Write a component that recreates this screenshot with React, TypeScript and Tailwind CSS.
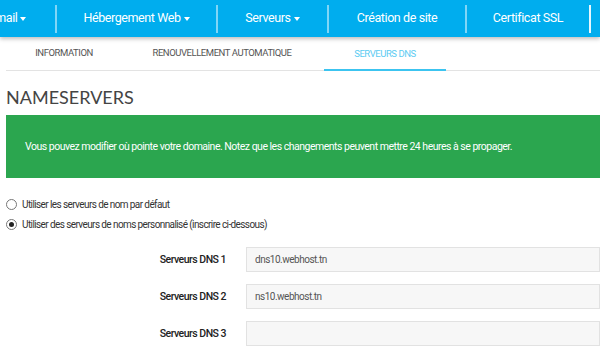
import React from 'react';

const font = { fontFamily: 'Roboto, "Liberation Sans", sans-serif' };

function Caret() {
  return <span className="ml-[3px] inline-block w-0 h-0 border-l-[3px] border-r-[3px] border-t-[4px] border-l-transparent border-r-transparent border-t-white align-middle" />;
}

function Divider({ bright }: { bright?: boolean }) {
  return <span className={`w-[2px] h-[28px] self-center ${bright ? 'bg-white/90' : 'bg-white/50'}`} />;
}

export default function App() {
  const [mode, setMode] = React.useState<'default' | 'custom'>('custom');
  const [dns, setDns] = React.useState(['dns10.webhost.tn', 'ns10.webhost.tn', '']);

  const navItems = [
    { label: 'Hébergement Web', caret: true, w: 'w-[159px]' },
    { label: 'Serveurs', caret: true, w: 'w-[109px]' },
    { label: 'Création de site', caret: false, w: 'w-[136px]' },
    { label: 'Certificat SSL', caret: false, w: 'w-[122px]' },
  ];

  return (
    <div className="w-[600px] h-[349px] overflow-hidden bg-white" style={font}>
      {/* Top nav */}
      <div className="relative z-10 h-[37px] bg-[#00adee] flex shadow-[0_2px_4px_rgba(0,0,0,0.25)] text-white text-[12.5px] tracking-[-0.4px]">
        <div className="-ml-[40px] w-[95px] flex items-center justify-center">
          Email<Caret />
        </div>
        {navItems.map((n) => (
          <React.Fragment key={n.label}>
            <Divider />
            <div className={`${n.w} flex items-center justify-center`}>
              {n.label}
              {n.caret && <Caret />}
            </div>
          </React.Fragment>
        ))}
        <Divider bright />
      </div>

      {/* Tabs */}
      <div className="ml-[6px] flex h-[34px] border-b border-[#e3e3e3] text-[9.5px] uppercase tracking-[-0.45px]">
        <div className="w-[116px] flex items-center justify-center text-[#555]">Information</div>
        <div className="w-[200px] flex items-center justify-center text-[#555]">Renouvellement automatique</div>
        <div className="ml-[2px] w-[122px] flex items-center justify-center text-[#5ccbf2] border-b-2 border-[#3cc4f0] -mb-px pt-[2px]">Serveurs DNS</div>
      </div>

      <div className="pl-[6px]">
        <h1 className="mt-[13px] text-[18px] leading-[26px] text-[#444]" style={{ fontFamily: 'Lato, sans-serif' }}>NAMESERVERS</h1>

        <div className="mt-[5px] h-[63px] bg-[#2ba64f] flex items-center pl-[19px] text-white text-[10.5px] tracking-[-0.5px]">
          Vous pouvez modifier où pointe votre domaine. Notez que les changements peuvent mettre 24 heures à se propager.
        </div>

        <div className="mt-[20px] flex flex-col gap-[8px] text-[10px] text-[#333] tracking-[-0.6px]">
          <label className="flex items-center gap-[5px] h-[12px]" onClick={() => setMode('default')}>
            <span className="w-[11px] h-[11px] rounded-full border border-[#777] flex items-center justify-center bg-white">
              {mode === 'default' && <span className="w-[5px] h-[5px] rounded-full bg-[#222]" />}
            </span>
            Utiliser les serveurs de nom par défaut
          </label>
          <label className="flex items-center gap-[5px] h-[12px]" onClick={() => setMode('custom')}>
            <span className="w-[11px] h-[11px] rounded-full border border-[#777] flex items-center justify-center bg-white">
              {mode === 'custom' && <span className="w-[5px] h-[5px] rounded-full bg-[#222]" />}
            </span>
            Utiliser des serveurs de noms personnalisé (inscrire ci-dessous)
          </label>
        </div>

        <div className="mt-[17px] flex flex-col gap-[12px]">
          {dns.map((v, i) => (
            <div key={i} className="flex items-center">
              <div className="w-[224px] text-right text-[10.5px] font-medium text-[#222] tracking-[-0.5px]">Serveurs DNS {i + 1}</div>
              <input
                value={v}
                onChange={(e) => setDns(dns.map((d, j) => (j === i ? e.target.value : d)))}
                className="ml-[20px] w-[360px] h-[25px] px-[8px] bg-[#f7f7f7] border border-[#e2e2e2] text-[10px] text-[#555] tracking-[-0.5px] outline-none"
                style={font}
              />
            </div>
          ))}
        </div>
      </div>
    </div>
  );
}
